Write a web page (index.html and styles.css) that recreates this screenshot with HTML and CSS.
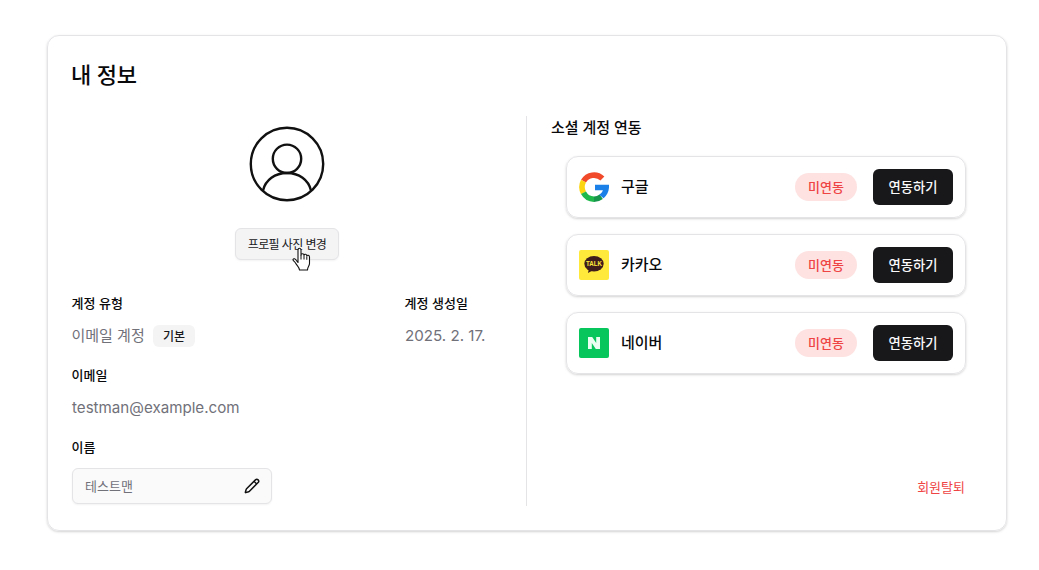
FILE: index.html
```html
<!DOCTYPE html>
<html lang="ko">
<head>
<meta charset="utf-8">
<title>내 정보</title>
<link rel="stylesheet" href="styles.css">
</head>
<body>
<main class="card">
  <h1 class="title">내 정보</h1>
  <div class="columns">
    <section class="profile">
      <svg class="avatar" viewBox="0 0 80 80" fill="none" stroke="#111" stroke-width="2.400"><circle cx="40" cy="40" r="36.200"/><circle cx="40" cy="34.800" r="14.200"/><path d="M16 66.500C18.500 56 28 49 40 49s21.500 7 24 17.500"/></svg>
      <div class="photo">
        <button class="photo-button">프로필 사진 변경</button>
        <svg class="pointer" viewBox="0 0 19 24"><path d="M6 15.500V3.200C6 .5 9 .5 9 3.200V8c0-1.700 3-1.700 3 .3.300-1.500 2.800-1.400 2.800.7.300-1.200 2.700-1 2.700 1v6.500c0 2.500-2 3-2 6.500H7.500c0-2.500-2.500-4.300-4-7C2.700 14.500.7 13.800 1 12.500c.6-1.500 2.400-.6 3.300.8Z" fill="#fff" stroke="#111" stroke-width="1.100" stroke-linejoin="round"/><path d="M9 8v4.500M12 8.500v4M14.800 9.500v3.300" stroke="#111" fill="none"/></svg>
      </div>
      <div class="fields">
        <div class="field kind"><h2 class="label">계정 유형</h2><p class="value"><span class="kind-name">이메일 계정</span><span class="tag">기본</span></p></div>
        <div class="field"><h2 class="label">계정 생성일</h2><p class="value latin">2025. 2. 17.</p></div>
      </div>
      <div class="field"><h2 class="label">이메일</h2><p class="value latin">testman@example.com</p></div>
      <div class="field last"><h2 class="label">이름</h2>
        <div class="name-box"><span class="name-value">테스트맨</span><svg class="pencil" viewBox="0 0 24 24" fill="none" stroke="#111" stroke-width="2.200" stroke-linecap="round" stroke-linejoin="round"><path d="M21.170 6.810a2.800 2.800 0 0 0-3.980-3.980L3.840 16.170a2 2 0 0 0-.5.830l-1.320 4.350a.5.5 0 0 0 .62.620l4.350-1.320a2 2 0 0 0 .830-.5zM15 5l4 4"/></svg></div>
      </div>
    </section>
    <section class="social">
      <h2 class="social-title">소셜 계정 연동</h2>
      <div class="accounts">
        <div class="account">
          <svg class="logo" viewBox="0 0 30 30" fill="none" stroke-width="5.600"><path d="M23.400 6.600A12 12 0 0 0 4.500 9.200" stroke="#f14a2b"/><path d="M4.500 9.200A12.100 12.100 0 0 0 4.500 20.800" stroke="#fbd512"/><path d="M4.500 20.800A12.100 12.100 0 0 0 15 27.200" stroke="#1fb84b"/><path d="M15 27.200A12.100 12.100 0 0 0 22.200 24.800" stroke="#15964a"/><path d="M16 12.700h14c.4 5.300-1.500 10.500-5.400 13.500l-4.400-3.500c1.800-1.200 3.200-2.800 3.700-4.500H16Z" fill="#1b81e8"/></svg>
          <span class="name">구글</span><span class="status">미연동</span><button class="connect">연동하기</button>
        </div>
        <div class="account">
          <svg class="logo" viewBox="0 0 30 30"><rect width="30" height="30" rx="2" fill="#ffe93b"/><ellipse cx="15" cy="13.800" rx="9.700" ry="7.700" fill="#3f1d1c"/><path d="M10 18l-1 5 5.500-3Z" fill="#3f1d1c"/><text class="talk" x="15" y="16.300" text-anchor="middle" textLength="16" lengthAdjust="spacingAndGlyphs">TALK</text></svg>
          <span class="name">카카오</span><span class="status">미연동</span><button class="connect">연동하기</button>
        </div>
        <div class="account">
          <svg class="logo" viewBox="0 0 30 30"><rect width="30" height="30" rx="2" fill="#06c65c"/><path d="M9 9h4.200l4 6V9H21v12h-4.200l-4-6v6H9Z" fill="#eafff2"/></svg>
          <span class="name">네이버</span><span class="status">미연동</span><button class="connect">연동하기</button>
        </div>
      </div>
      <a class="leave">회원탈퇴</a>
    </section>
  </div>
</main>
</body>
</html>
```
FILE: styles.css
```css
* { box-sizing: border-box; margin: 0; }
body { min-height: 570px; padding: 35px 32px 0 47px; background: #fff; color: #09090b; font-family: "Noto Sans CJK KR", sans-serif; }
button { font-family: inherit; }
.card { width: 960px; height: 496px; padding: 24px; border: 1px solid #e4e4e7; border-radius: 12px; box-shadow: 0 1px 3px rgba(0,0,0,.12), 0 1px 2px rgba(0,0,0,.06); }
.title { height: 56px; font-size: 22px; line-height: 27px; font-weight: 500; letter-spacing: -.3px; text-indent: -1px; }
.columns { display: grid; grid-template-columns: 454px 456px; height: 390px; }
.profile { padding-top: 8px; padding-right: 24px; }
.avatar { display: block; width: 80px; height: 80px; margin: 0 auto; }
.photo { position: relative; width: 104px; margin: 24px auto 32px; }
.photo-button { display: block; width: 104px; height: 32px; padding: 0 0 2px; border: 1px solid #e4e4e7; border-radius: 6px; background: #f4f4f5; color: #18181b; font-size: 12px; font-weight: 400; letter-spacing: -.6px; white-space: nowrap; box-shadow: 0 1px 2px rgba(0,0,0,.05); }
.pointer { position: absolute; left: 57px; top: 19px; width: 19px; height: 24px; }
.fields { display: flex; }
.kind { width: 333px; }
.field { height: 72px; }
.field.last { height: 68px; }
.label { height: 24px; font-size: 13px; line-height: 22px; font-weight: 500; text-indent: -.5px; }
.value { display: flex; align-items: center; height: 24px; margin-top: 8px; color: #71717a; font-size: 15px; line-height: 24px; }
.kind-name { width: 73px; line-height: 22px; height: 24px; text-indent: -.5px; white-space: nowrap; }
.latin { font-family: Inter, sans-serif; font-size: 15.150px; }
.tag { margin-left: 8px; width: 42px; height: 22px; border-radius: 6px; background: #f4f4f5; color: #18181b; font-size: 12px; line-height: 21px; font-weight: 500; text-align: center; }
.name-box { display: flex; align-items: center; justify-content: space-between; width: 200px; height: 36px; margin-top: 8px; padding: 0 11px 0 12px; border: 1px solid #e4e4e7; border-radius: 6px; background: #fafafa; color: #71717a; font-size: 13px; box-shadow: 0 1px 2px rgba(0,0,0,.05); }
.name-value { padding-bottom: 2px; }
.pencil { width: 16px; height: 16px; }
.social { display: flex; flex-direction: column; padding-left: 24px; border-left: 1px solid #e4e4e7; }
.social-title { height: 40px; font-size: 15px; line-height: 21px; font-weight: 500; letter-spacing: -.1px; }
.accounts { display: flex; flex-direction: column; gap: 16px; margin: 0 16px 0 15px; }
.account { display: flex; align-items: center; height: 62px; padding: 0 12px; border: 1px solid #e4e4e7; border-radius: 12px; box-shadow: 0 1px 3px rgba(0,0,0,.12), 0 1px 2px rgba(0,0,0,.06); }
.logo { width: 30px; height: 30px; }
.talk { fill: #ffe93b; font-family: "Liberation Sans", sans-serif; font-size: 6.500px; font-weight: 700; }
.name { flex: 1; margin-left: 12px; padding-bottom: 2px; font-size: 15px; line-height: 24px; font-weight: 500; }
.status { width: 62px; height: 28px; border-radius: 14px; background: #fee2e2; color: #ef4444; font-size: 13px; line-height: 27px; font-weight: 500; text-align: center; }
.connect { width: 80px; height: 36px; margin-left: 16px; padding: 0 0 2px; border: 0; border-radius: 6px; background: #18181b; color: #fafafa; font-size: 13.300px; font-weight: 500; }
.leave { align-self: flex-end; margin: auto 17px 9px 0; color: #ef4444; font-size: 13px; line-height: 20px; }
```
